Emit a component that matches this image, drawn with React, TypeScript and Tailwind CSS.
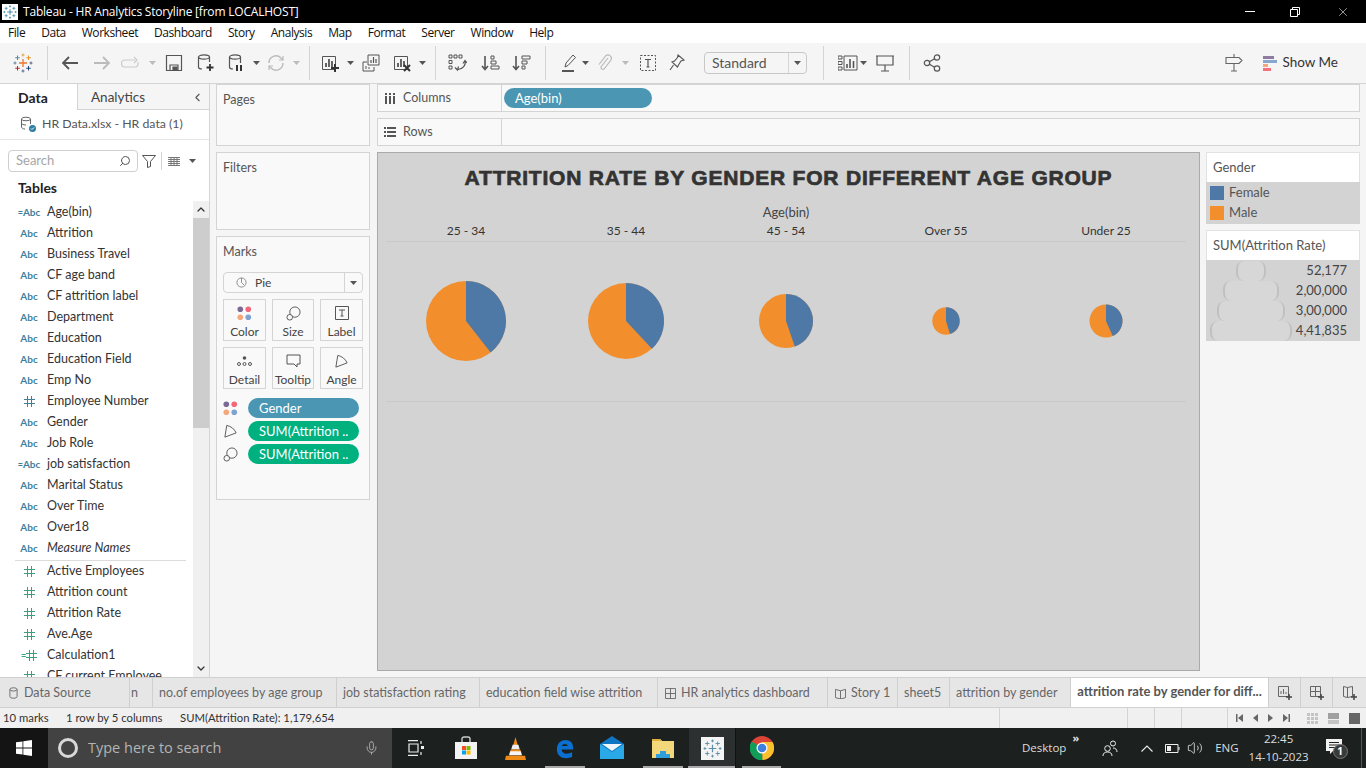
import type { ReactNode } from 'react';
import { X, ChevronLeft, ChevronUp, ChevronDown, Search, Mic, Volume2 } from 'lucide-react';

const dims = [
  { name: 'Age(bin)', calc: true },
  { name: 'Attrition' },
  { name: 'Business Travel' },
  { name: 'CF age band' },
  { name: 'CF attrition label' },
  { name: 'Department' },
  { name: 'Education' },
  { name: 'Education Field' },
  { name: 'Emp No' },
  { name: 'Employee Number', hash: true },
  { name: 'Gender' },
  { name: 'Job Role' },
  { name: 'job satisfaction', calc: true },
  { name: 'Marital Status' },
  { name: 'Over Time' },
  { name: 'Over18' },
  { name: 'Measure Names', italic: true },
];

const measures = [
  { name: 'Active Employees' },
  { name: 'Attrition count' },
  { name: 'Attrition Rate' },
  { name: 'Ave.Age' },
  { name: 'Calculation1', calc: true },
  { name: 'CF current Employee' },
];

const pies = [
  { label: '25 - 34', r: 40, angle: 142 },
  { label: '35 - 44', r: 38, angle: 137 },
  { label: '45 - 54', r: 27, angle: 161 },
  { label: 'Over 55', r: 13.7, angle: 163 },
  { label: 'Under 25', r: 16.5, angle: 156 },
];

const tabs = [
  { name: 'no.of employees by age group', w: 'w-[184px]' },
  { name: 'job statisfaction rating', w: 'w-[143px]' },
  { name: 'education field wise attrition', w: 'w-[178px]' },
  { name: 'HR analytics dashboard', w: 'w-[170px]', icon: 'dash' },
  { name: 'Story 1', w: 'w-[70px]', icon: 'story' },
  { name: 'sheet5', w: 'w-[52px]' },
  { name: 'attrition by gender', w: 'w-[121px]' },
];

function Ico({ children, className = '' }: { children: ReactNode; className?: string }) {
  return (
    <svg viewBox="0 0 20 20" fill="none" stroke="currentColor" strokeWidth="1.2" className={`w-5 h-5 shrink-0 ${className}`}>
      {children}
    </svg>
  );
}

function Caret({ className = '' }: { className?: string }) {
  return (
    <svg viewBox="0 0 7 4" className={`w-[7px] h-1 shrink-0 ${className}`}>
      <path d="M0 0h7L3.5 4z" fill="currentColor" />
    </svg>
  );
}

function Sep({ className = '' }: { className?: string }) {
  return <div className={`w-px h-[34px] bg-[#d4d4d4] shrink-0 ${className}`} />;
}

function Snowflake({ className = '', mono }: { className?: string; mono?: string }) {
  const c = (x: string) => mono ?? x;
  return (
    <svg viewBox="0 0 20 20" className={className} strokeWidth="1" fill="none">
      <path d="M10 6v8M6 10h8" stroke={c('#e8762d')} strokeWidth="1.3" />
      <path d="M4.500 2.500v4.500M2.250 4.750h4.500" stroke={c('#5b879b')} />
      <path d="M15.500 2.500v4.500M13.250 4.750h4.500" stroke={c('#eb9129')} />
      <path d="M4.500 13v4.500M2.250 15.250h4.500" stroke={c('#c72035')} />
      <path d="M15.500 13v4.500M13.250 15.250h4.500" stroke={c('#1f447e')} />
      <path d="M10 .5v3M8.500 2h3" stroke={c('#e8a33d')} />
      <path d="M10 16.500v3M8.500 18h3" stroke={c('#5c6692')} />
      <path d="M2 8.500v3M.5 10h3" stroke={c('#59879b')} />
      <path d="M18 8.500v3M16.500 10h3" stroke={c('#5b6591')} />
    </svg>
  );
}

function Bars() {
  return (
    <g>
      <path d="M2.500 3.500h13v13h-13z" strokeWidth="1" />
      <path d="M6 14V10M9 14V6M12 14V8" strokeWidth="1.800" />
    </g>
  );
}

function ColorDots({ className = '' }: { className?: string }) {
  return (
    <svg viewBox="0 0 16 16" className={`w-[15px] h-[15px] ${className}`}>
      <circle cx="3.500" cy="3.500" r="3" fill="#7b6a94" />
      <circle cx="12" cy="3.500" r="3" fill="#f2687a" />
      <circle cx="3.500" cy="12" r="3" fill="#f4a77a" />
      <circle cx="12" cy="12" r="3" fill="#7fa2cf" />
    </svg>
  );
}

function SizeIcon({ className = '' }: { className?: string }) {
  return (
    <svg viewBox="0 0 16 16" fill="none" stroke="#555" strokeWidth="1" className={`w-[15px] h-[15px] ${className}`}>
      <circle cx="9.500" cy="6.500" r="5.500" fill="#f9f9f9" />
      <circle cx="4" cy="12" r="3" fill="#f9f9f9" />
    </svg>
  );
}

function AngleIcon({ className = '' }: { className?: string }) {
  return (
    <svg viewBox="0 0 16 16" fill="none" stroke="#555" strokeWidth="1" className={`w-[15px] h-[15px] ${className}`}>
      <path d="M4 1.500 2 14l12-4.500C12 5 8.500 2.500 4 1.500z" />
    </svg>
  );
}

function Toolbar() {
  return (
    <div className="h-[41px] bg-[#f5f5f5] border-b border-[#d4d4d4] flex items-center pl-[13px] text-[#555] shrink-0">
      <Snowflake className="w-5 h-5 shrink-0" />
      <Sep className="ml-[14px]" />
      <Ico className="ml-[12px]"><path d="M18 10H3M9 4l-6 6 6 6" strokeWidth="1.800" /></Ico>
      <Ico className="ml-[12px] text-[#bbb]"><path d="M2 10h15M11 4l6 6-6 6" strokeWidth="1.800" /></Ico>
      <Ico className="ml-[9px] text-[#ccc]"><path d="M14 7H4a3 3 0 0 0 0 7h10a3 3 0 0 0 3-3V9M13 4l3 3-3 3" /></Ico>
      <Caret className="ml-[8px] text-[#bbb]" />
      <Ico className="ml-[8px]"><path d="M2.500 2.500h15v15h-15zM6 17v-5h8v5" /><path d="M9 14h4v3H9z" fill="currentColor" /></Ico>
      <Ico className="ml-[11px]">
        <ellipse cx="9" cy="4" rx="5.500" ry="2.200" />
        <path d="M3.500 4v10c0 1 1.500 2 3.500 2M14.500 4v5" />
        <path d="M15 11v7M11.500 14.500h7" strokeWidth="1.800" stroke="#333" />
      </Ico>
      <Ico className="ml-[11px]">
        <ellipse cx="9" cy="4" rx="5.500" ry="2.200" />
        <path d="M3.500 4v10c0 1 1.500 2 3.500 2M14.500 4v6" />
        <path d="M11 12v6M15 12v6" strokeWidth="2" stroke="#333" />
      </Ico>
      <Caret className="ml-[7px]" />
      <Ico className="ml-[6px] text-[#bbb]">
        <path d="M3 10a7 7 0 0 1 12-5l2 2M17 10a7 7 0 0 1-12 5l-2-2" strokeWidth="1.400" />
        <path d="M17 3v4h-4M3 17v-4h4" strokeWidth="1.200" />
      </Ico>
      <Caret className="ml-[7px] text-[#bbb]" />
      <Sep className="ml-[9px]" />
      <Ico className="ml-[10px]"><Bars /><path d="M15 11v8M11 15h8" strokeWidth="2" stroke="#333" /></Ico>
      <Caret className="ml-[7px]" />
      <Ico className="ml-[7px]">
        <path d="M7 2h11v10H7z" strokeWidth="1" />
        <path d="M10 10V7M12.500 10V4M15 10V6" />
        <path d="M2 9h4M2 9v9h11v-4M5 16v-3M8 16v-2" strokeWidth="1" />
      </Ico>
      <Ico className="ml-[11px]"><Bars /><path d="m12 12 6 6M18 12l-6 6" strokeWidth="2" stroke="#333" /></Ico>
      <Caret className="ml-[7px]" />
      <Sep className="ml-[9px]" />
      <Ico className="ml-[11px]">
        <path d="M2 2h3v3H2zM7 2h3v3H7zM12 2h3v3h-3zM2 7.500h3v3H2zM2 13h3v3H2z" strokeWidth="1" />
        <path d="M18 8c1 4-2 8-7 8.500M8 14.500l2.500 2.500 1-3.500M16 10.500l2-3 2 2.500" strokeWidth="1.200" />
      </Ico>
      <Ico className="ml-[13px]">
        <path d="M5 3v13M2 13l3 3.500L8 13" strokeWidth="1.600" />
        <path d="M11 3h3v3h-3zM11 8h5v3h-5zM11 13h8v3h-8z" strokeWidth="1" />
      </Ico>
      <Ico className="ml-[11px]">
        <path d="M5 3v13M2 13l3 3.500L8 13" strokeWidth="1.600" />
        <path d="M11 3h8v3h-8zM11 8h5v3h-5zM11 13h3v3h-3z" strokeWidth="1" />
      </Ico>
      <Sep className="ml-[14px]" />
      <Ico className="ml-[13px]">
        <path d="m6 14 1-4 7-8 2.500 2.500-7.500 8z" strokeWidth="1" />
        <path d="M3 18h12" strokeWidth="2" />
      </Ico>
      <Caret className="ml-[3px]" />
      <Ico className="ml-[5px] text-[#bbb]">
        <path d="m14 5-7 9a2 2 0 0 0 3 2l7-9a3.500 3.500 0 0 0-5-4.500l-7 9" strokeWidth="1.200" />
      </Ico>
      <Caret className="ml-[8px] text-[#bbb]" />
      <Ico className="ml-[9px]">
        <path d="M2.500 2.500h15v15h-15z" strokeWidth="1" strokeDasharray="2 1.500" />
        <path d="M7 6.500h6M10 6.500v7.500M8.500 14h3" strokeWidth="1.200" />
      </Ico>
      <Ico className="ml-[9px]">
        <path d="m11 2 6 5-3 1-2.500 4-1 2L5 9l2.500-1 3-3.500zM6.500 12 3 17" strokeWidth="1.100" />
      </Ico>
      <div className="ml-[17px] w-[103px] h-[22px] border border-[#c8c8c8] rounded-sm flex items-center bg-[#f5f5f5] shrink-0">
        <span className="flex-1 pl-[7px] text-[14px] text-[#555] leading-none">Standard</span>
        <span className="w-[18px] h-full border-l border-[#d4d4d4] flex items-center justify-center">
          <Caret />
        </span>
      </div>
      <Sep className="ml-[16px]" />
      <Ico className="ml-[14px]">
        <path d="M0 3h4v3H0zM0 8.500h4v3H0zM0 14h4v3H0z" strokeWidth="1" />
        <path d="M6 3h13v14H6z" strokeWidth="1" />
        <path d="M9 15v-4M12 15V6M15.500 15V8" strokeWidth="1.600" />
      </Ico>
      <Caret className="ml-[2px]" />
      <Ico className="ml-[8px]">
        <path d="M2 3h16v9H2zM1 3h18M10 12v6M6 18h8" strokeWidth="1.200" />
      </Ico>
      <Sep className="ml-[14px]" />
      <Ico className="ml-[12px]">
        <circle cx="15" cy="4.500" r="2.700" />
        <circle cx="15" cy="15.500" r="2.700" />
        <circle cx="5" cy="10" r="2.700" />
        <path d="m7.500 8.700 5-3M7.500 11.300l5 3" />
      </Ico>
      <div className="flex-1" />
      <Ico className="text-[#666]">
        <path d="M10 1v3M2 4.500h13l3 3-3 3H2zM10 10.500V18M7 18h6" strokeWidth="1.100" />
      </Ico>
      <div className="ml-[19px] flex flex-col gap-[1px] w-[15px]">
        <span className="h-[3px] w-[11px] bg-[#8e7ba0]" />
        <span className="h-[3px] w-[14px] bg-[#86a7d0]" />
        <span className="h-[3px] w-[5px] bg-[#f4a77a]" />
        <span className="h-[3px] w-[8px] bg-[#f5707f]" />
      </div>
      <span className="ml-[4px] mr-[28px] pb-[1px] text-[13.500px] text-[#333]">Show Me</span>
    </div>
  );
}

function FieldIcon({ kind, calc, color }: { kind: 'abc' | 'hash'; calc?: boolean; color: string }) {
  return (
    <span className={`w-[47px] pl-[11px] flex items-center justify-center text-[10px] font-bold shrink-0 ${color}`}>
      {calc && <span className="text-[9px] tracking-[-1px] mr-px">=</span>}
      {kind === 'abc' ? (
        <span>Abc</span>
      ) : (
        <svg viewBox="0 0 11 11" className="w-[11px] h-[11px]" stroke="currentColor" strokeWidth="1" fill="none">
          <path d="M3.500 0v11M7.500 0v11M0 3.500h11M0 7.500h11" />
        </svg>
      )}
    </span>
  );
}

function DataPane() {
  return (
    <div className="w-[210px] shrink-0 bg-white border-r border-[#d4d4d4] flex flex-col overflow-hidden">
      <div className="h-[26px] flex text-[14px] shrink-0">
        <div className="w-[77px] flex items-center pl-[18px] font-bold text-[#222]">Data</div>
        <div className="flex-1 bg-[#f5f5f5] border-l border-b border-[#d4d4d4] flex items-center pl-[13px] pt-[1px] text-[13.500px] text-[#444]">
          Analytics
          <ChevronLeft className="ml-auto mr-[5px] w-[13px] h-[13px] text-[#555]" />
        </div>
      </div>
      <div className="h-[30px] flex items-center pl-[20px] text-[12.300px] text-[#555] border-b border-[#e6e6e6] shrink-0">
        <svg viewBox="0 0 17 17" className="w-[17px] h-[17px] mr-[5px]" fill="none" stroke="#666" strokeWidth="1">
          <ellipse cx="6" cy="3" rx="4.500" ry="1.800" />
          <path d="M1.500 3v8c0 1 1.500 2 3.500 2M10.500 3v5M1.500 7c0 1 1.500 2 4.500 2" />
          <circle cx="12.500" cy="12.500" r="3.500" fill="#2f7ea3" stroke="none" />
          <path d="m11 12.500 1 1 2-2" stroke="#fff" />
        </svg>
        HR Data.xlsx - HR data (1)
      </div>
      <div className="h-[22px] mt-[10px] flex items-center pl-[8px] shrink-0">
        <div className="w-[130px] h-[22px] border border-[#cfcfcf] rounded-sm flex items-center pl-[7px] pr-[6px] text-[13px] text-[#a5a5a5]">
          Search
          <Search className="ml-auto w-[12px] h-[12px] text-[#555] -scale-x-100" />
        </div>
        <svg viewBox="0 0 14 14" className="w-[14px] h-[14px] ml-[4px]" fill="none" stroke="#555" strokeWidth="1">
          <path d="M.500 1.500h13L8.500 7.500v5l-3 1v-6z" />
        </svg>
        <span className="w-px h-[18px] bg-[#d4d4d4] ml-[5px]" />
        <svg viewBox="0 0 12 9" className="w-[12px] h-[9px] ml-[6px]" stroke="#777" strokeWidth="1" fill="none">
          <path d="M0 .500h12M0 2.500h12M0 4.500h12M0 6.500h12M0 8.500h12M3 0v9M6 0v9M9 0v9" />
        </svg>
        <Caret className="ml-[9px] text-[#555]" />
      </div>
      <div className="h-[29px] flex items-end pl-[18px] pb-[3px] text-[14px] font-bold text-[#222] shrink-0">Tables</div>
      <div className="flex-1 flex min-h-0">
        <div className="flex-1 overflow-hidden pt-[1px] text-[12.500px] text-[#333]">
          {dims.map((f) => (
            <div key={f.name} className="h-[21px] flex items-center">
              <FieldIcon kind={f.hash ? 'hash' : 'abc'} calc={f.calc} color="text-[#3f7f9d]" />
              <span className={`whitespace-nowrap ${f.italic ? 'italic' : ''}`}>{f.name}</span>
            </div>
          ))}
          <div className="h-px bg-[#dcdcdc] ml-[15px] mr-[7px] mt-[1px]" />
          {measures.map((f) => (
            <div key={f.name} className="h-[21px] flex items-center">
              <FieldIcon kind="hash" calc={f.calc} color="text-[#3a9f7c]" />
              <span className="whitespace-nowrap">{f.name}</span>
            </div>
          ))}
        </div>
        <div className="w-[16px] bg-[#f0f0f0] flex flex-col items-center shrink-0">
          <ChevronUp className="h-[17px] w-[12px] text-[#333] shrink-0" strokeWidth={2.500} />
          <div className="w-full h-[210px] bg-[#cdcdcd]" />
          <ChevronDown className="mt-auto h-[17px] w-[12px] text-[#333] shrink-0" strokeWidth={2.500} />
        </div>
      </div>
    </div>
  );
}

function MarkBtn({ label, icon }: { label: string; icon: ReactNode }) {
  return (
    <div className="border border-[#d4d4d4] flex flex-col items-center justify-between pt-[5px] pb-[1px] text-[12px] text-[#444] bg-[#f9f9f9]">
      <span className="h-[16px] flex items-center">{icon}</span>
      <span className="leading-[14px] whitespace-nowrap">{label}</span>
    </div>
  );
}

function MarksPill({ icon, label, color }: { icon: ReactNode; label: string; color: string }) {
  return (
    <div className="h-[20px] flex items-center">
      <span className="w-[15px] mr-[10px] flex justify-center shrink-0">{icon}</span>
      <span className={`w-[111px] h-[20px] rounded-full pl-[11px] text-[13px] leading-[20px] text-white whitespace-nowrap ${color}`}>{label}</span>
    </div>
  );
}

function SidePanels() {
  return (
    <div className="w-[154px] ml-[6px] shrink-0 flex flex-col text-[12.500px] text-[#555]">
      <div className="h-[62px] border border-[#d4d4d4] bg-[#f9f9f9] pl-[6px] pt-[6px]">Pages</div>
      <div className="h-[78px] mt-[6px] border border-[#d4d4d4] bg-[#f9f9f9] pl-[6px] pt-[6px]">Filters</div>
      <div className="h-[264px] mt-[6px] border border-[#d4d4d4] bg-[#f9f9f9] px-[6px] pt-[6px]">
        <div className="leading-[18px]">Marks</div>
        <div className="mt-[11px] h-[21px] border border-[#d4d4d4] rounded-sm flex items-center text-[12px] text-[#444]">
          <svg viewBox="0 0 12 12" className="w-[11px] h-[11px] ml-[12px] mr-[8px]" fill="none" stroke="#888" strokeWidth="1">
            <circle cx="6" cy="6" r="5" />
            <path d="M6 1v5l3 3" />
          </svg>
          Pie
          <span className="ml-auto w-[18px] h-full border-l border-[#d4d4d4] flex items-center justify-center text-[#555]">
            <Caret />
          </span>
        </div>
        <div className="mt-[6px] grid grid-cols-[43px_42px_43px] gap-x-[6px] gap-y-[6px] [grid-auto-rows:42px]">
          <MarkBtn label="Color" icon={<ColorDots />} />
          <MarkBtn label="Size" icon={<SizeIcon />} />
          <MarkBtn
            label="Label"
            icon={
              <svg viewBox="0 0 14 14" className="w-[14px] h-[14px]" fill="none" stroke="#555" strokeWidth="1">
                <path d="M.500.500h13v13H.500zM4 4h6M7 4v6M5.500 10h3" />
              </svg>
            }
          />
          <MarkBtn
            label="Detail"
            icon={
              <svg viewBox="0 0 15 10" className="w-[15px] h-[10px]" fill="none" stroke="#555" strokeWidth="1">
                <circle cx="7.500" cy="2" r="1.800" fill="#555" stroke="none" />
                <circle cx="2" cy="8" r="1.500" />
                <circle cx="7.500" cy="8" r="1.500" />
                <circle cx="13" cy="8" r="1.500" />
              </svg>
            }
          />
          <MarkBtn
            label="Tooltip"
            icon={
              <svg viewBox="0 0 15 14" className="w-[15px] h-[14px]" fill="none" stroke="#555" strokeWidth="1">
                <path d="M1 1h13v9h-3v3l-3-3H1z" />
              </svg>
            }
          />
          <MarkBtn label="Angle" icon={<AngleIcon />} />
        </div>
        <div className="mt-[9px] flex flex-col gap-[3px]">
          <MarksPill icon={<ColorDots />} label="Gender" color="bg-[#4b96b3]" />
          <MarksPill icon={<AngleIcon />} label="SUM(Attrition .." color="bg-[#00b180]" />
          <MarksPill icon={<SizeIcon />} label="SUM(Attrition .." color="bg-[#00b180]" />
        </div>
      </div>
    </div>
  );
}

function Shelf({ label, icon, children, className = '' }: { label: string; icon: ReactNode; children?: ReactNode; className?: string }) {
  return (
    <div className={`h-[28px] border border-[#d4d4d4] bg-[#f9f9f9] flex items-center text-[12.500px] text-[#555] ${className}`}>
      <span className="w-[124px] h-full border-r border-[#d4d4d4] flex items-center pl-[6px] shrink-0">
        <span className="w-[12px] mr-[7px] flex justify-center">{icon}</span>
        {label}
      </span>
      <div className="pl-[2px]">{children}</div>
    </div>
  );
}

function PieMark({ r, angle }: { r: number; angle: number }) {
  const a = (angle * Math.PI) / 180;
  const x = 50 + r * Math.sin(a);
  const y = 50 - r * Math.cos(a);
  return (
    <svg viewBox="0 0 100 100" className="w-[100px] h-[100px]">
      <circle cx="50" cy="50" r={r} fill="#f28e2b" />
      <path d={`M50 50V${50 - r}A${r} ${r} 0 0 1 ${x} ${y}Z`} fill="#4e79a7" />
    </svg>
  );
}

function Chart() {
  return (
    <div className="w-[823px] h-[519px] bg-[#d3d3d3] border border-[#aaaaaa] flex flex-col shrink-0">
      <div className="h-[38px] mt-[6px] flex items-center justify-center text-[21px] font-bold tracking-[0.800px] text-[#333] font-['Liberation_Sans',sans-serif] [-webkit-text-stroke:0.7px_#333] whitespace-nowrap">
        ATTRITION RATE BY GENDER FOR DIFFERENT AGE GROUP
      </div>
      <div className="ml-[8px] w-[800px]">
        <div className="mt-[6px] h-[18px] text-center text-[13px] leading-[18px] text-[#444]">Age(bin)</div>
        <div className="grid grid-cols-5 h-[21px] border-b border-[#c8c8c8] text-[12px] leading-[20px] text-[#333] text-center">
          {pies.map((p) => (
            <span key={p.label}>{p.label}</span>
          ))}
        </div>
        <div className="grid grid-cols-5 h-[160px] border-b border-[#c8c8c8]">
          {pies.map((p) => (
            <div key={p.label} className="flex items-center justify-center pb-[2px]">
              <PieMark r={p.r} angle={p.angle} />
            </div>
          ))}
        </div>
      </div>
    </div>
  );
}

function SizeLegendRow({ width, value, bar }: { width: string; value: string; bar: string }) {
  return (
    <div className="h-[20px] flex items-center justify-end pr-[13px] relative">
      <span className={`absolute top-0 h-[20px] border-x-2 border-[#c0c0c0] rounded-[8px] bg-[#d7d7d7] ${width} ${bar}`} />
      <span className="relative text-[13px] text-[#444]">{value}</span>
    </div>
  );
}

function Legends() {
  return (
    <div className="w-[154px] ml-[6px] shrink-0 flex flex-col text-[13px]">
      <div className="h-[30px] pt-[1px] bg-white border border-b-0 border-[#e2e2e2] flex items-center pl-[6px] text-[#555]">Gender</div>
      <div className="h-[42px] bg-[#d3d3d3] pl-[4px] pt-[4px] flex flex-col gap-[6px] text-[#555]">
        <div className="flex items-center h-[14px]">
          <span className="w-[14px] h-[14px] bg-[#4e79a7] mr-[5px]" />
          Female
        </div>
        <div className="flex items-center h-[14px]">
          <span className="w-[14px] h-[14px] bg-[#f28e2b] mr-[5px]" />
          Male
        </div>
      </div>
      <div className="h-[30px] mt-[6px] bg-white border border-b-0 border-[#e2e2e2] flex items-center pl-[6px] text-[#555]">SUM(Attrition Rate)</div>
      <div className="h-[81px] bg-[#d3d3d3] pt-[1px]">
        <SizeLegendRow width="w-[30px]" bar="left-[30px]" value="52,177" />
        <SizeLegendRow width="w-[56px]" bar="left-[17px]" value="2,00,000" />
        <SizeLegendRow width="w-[68px]" bar="left-[11px]" value="3,00,000" />
        <SizeLegendRow width="w-[82px]" bar="left-[4px]" value="4,41,835" />
      </div>
    </div>
  );
}

function TabBar() {
  return (
    <div className="h-[31px] bg-[#e6e6e6] border-y border-[#d0d0d0] flex text-[12.500px] text-[#666] shrink-0 whitespace-nowrap">
      <div className="w-[130px] flex items-center pl-[9px] pt-[1px] border-r border-[#cfcfcf]">
        <svg viewBox="0 0 10 13" className="w-[9px] h-[12px] mr-[6px]" fill="none" stroke="#666" strokeWidth="1">
          <ellipse cx="5" cy="2.500" rx="4" ry="1.800" />
          <path d="M1 2.500v8c0 1 1.500 1.800 4 1.800s4-.8 4-1.800v-8" />
        </svg>
        Data Source
      </div>
      <div className="w-[23px] flex items-center pl-px pt-[1px] border-r border-[#cfcfcf]">n</div>
      {tabs.map((t) => (
        <div key={t.name} className={`${t.w} flex items-center pl-[6px] pt-[1px] border-r border-[#cfcfcf] overflow-hidden`}>
          {t.icon === 'dash' && (
            <svg viewBox="0 0 12 12" className="w-[11px] h-[11px] ml-[1px] mr-[5px]" fill="none" stroke="#666" strokeWidth="1">
              <path d="M.500.500h11v11H.500zM6 .500v11M.500 6h11" />
            </svg>
          )}
          {t.icon === 'story' && (
            <svg viewBox="0 0 12 12" className="w-[11px] h-[11px] ml-[1px] mr-[5px]" fill="none" stroke="#666" strokeWidth="1">
              <path d="M.500 1.500 6 3l5.500-1.500v9L6 12 .500 10.500zM6 3v9" />
            </svg>
          )}
          {t.name}
        </div>
      ))}
      <div className="w-[198px] bg-white flex items-center justify-center pb-[2px] text-[13px] font-bold text-[#555] border-r border-[#cfcfcf]">
        attrition rate by gender for diff...
      </div>
      <div className="w-[32px] flex items-center justify-center border-r border-[#cfcfcf]">
        <svg viewBox="0 0 16 16" className="w-[16px] h-[16px]" fill="none" stroke="#666" strokeWidth="1">
          <path d="M1.500 1.500h10v10h-10zM4 9V6M6.500 9V4M9 9V7" />
          <path d="M12 9v6M9 12h6" stroke="#444" strokeWidth="1.500" />
        </svg>
      </div>
      <div className="w-[32px] flex items-center justify-center border-r border-[#cfcfcf]">
        <svg viewBox="0 0 16 16" className="w-[16px] h-[16px]" fill="none" stroke="#666" strokeWidth="1">
          <path d="M1.500 1.500h10v10h-10zM6.500 1.500v10M1.500 6.500h10" />
          <path d="M12 9v6M9 12h6" stroke="#444" strokeWidth="1.500" />
        </svg>
      </div>
      <div className="flex-1 flex items-center justify-center">
        <svg viewBox="0 0 16 16" className="w-[16px] h-[16px]" fill="none" stroke="#666" strokeWidth="1">
          <path d="m1.500 1.500 4 1 5-1v10l-5 1-4-1zM5.500 2.500v10" />
          <path d="M12 9v6M9 12h6" stroke="#444" strokeWidth="1.500" />
        </svg>
      </div>
    </div>
  );
}

function StatusBar() {
  return (
    <div className="h-[20px] bg-[#f0f0f0] flex items-center text-[11.300px] text-[#333] shrink-0 whitespace-nowrap">
      <span className="w-[66px] pl-[3px]">10 marks</span>
      <span className="w-[114px]">1 row by 5 columns</span>
      <span className="w-[819px]">SUM(Attrition Rate): 1,179,654</span>
      <span className="w-[128px] h-full border-l border-[#d4d4d4]" />
      <span className="w-[27px] h-full border-l border-[#d4d4d4]" />
      <span className="w-[27px] h-full border-l border-[#d4d4d4]" />
      <span className="w-[46px] h-full border-l border-[#d4d4d4]" />
      <div className="flex-1 border-l border-[#d4d4d4] h-full flex items-center pl-[8px] text-[#666]">
        <svg viewBox="0 0 54 8" className="w-[54px] h-[8px] shrink-0" fill="currentColor">
          <path d="M0 0h1.500v8H0zM7 0v8L2 4zM22 0v8l-5-4zM32 0l5 4-5 4zM47 0l5 4-5 4zM52.500 0H54v8h-1.500z" />
        </svg>
        <span className="ml-[17px] grid grid-cols-3 gap-px w-[11px] h-[11px] shrink-0">
          {Array.from({ length: 9 }).map((_, i) => (
            <span key={i} className="bg-[#c4c4c4]" />
          ))}
        </span>
        <span className="ml-[10px] w-[11px] h-[11px] flex flex-col gap-px shrink-0">
          <span className="flex-[2] bg-[#a0a0a0]" />
          <span className="flex-1 bg-[#c4c4c4]" />
        </span>
        <span className="ml-[10px] w-[11px] h-[11px] bg-[#666] shrink-0" />
      </div>
    </div>
  );
}

function Taskbar() {
  return (
    <div className="h-[40px] bg-[#1c2120] flex items-center text-[#ddd] shrink-0 relative font-['Open_Sans',sans-serif]">
      <div className="w-[48px] h-full bg-[#141414] flex items-center justify-center shrink-0">
        <svg viewBox="0 0 16 16" className="w-[16px] h-[16px]" fill="#fff">
          <path d="M0 2.300 6.500 1.400v6.200H0zM7.300 1.300 16 0v7.600H7.300zM0 8.400h6.500v6.200L0 13.700zM7.300 8.400H16V16l-8.700-1.300z" />
        </svg>
      </div>
      <div className="w-[344px] h-full bg-[#424242] flex items-center pl-[10px] shrink-0">
        <span className="w-[20px] h-[20px] rounded-full border-[3px] border-[#d8d8d8] shrink-0" />
        <span className="ml-[10px] text-[14.500px] text-[#b4b4b4] whitespace-nowrap">Type here to search</span>
        <Mic className="ml-auto mr-[13px] w-[15px] h-[18px] text-[#bbb]" strokeWidth={1.300} />
      </div>
      <svg viewBox="0 0 18 16" className="w-[18px] h-[16px] ml-[15px] shrink-0" fill="none" stroke="#eee" strokeWidth="1.200">
        <path d="M1 .600h10M1 15.400h10M2 4h9v8H2zM14 1v3M14 12v3" />
        <path d="M14 6h3v3h-3z" fill="#eee" stroke="none" />
      </svg>
      <svg viewBox="0 0 24 24" className="w-[24px] h-[24px] ml-[29px] shrink-0">
        <path d="M8 6V3a2 2 0 0 1 2-2h4a2 2 0 0 1 2 2v3" fill="none" stroke="#ccc" strokeWidth="1.400" />
        <path d="M1 6h22v17H1z" fill="#f3f3f3" />
        <path d="M8 10h4v4H8z" fill="#f25022" />
        <path d="M12.500 10h4v4h-4z" fill="#7fba00" />
        <path d="M8 14.500h4v4H8z" fill="#00a4ef" />
        <path d="M12.500 14.500h4v4h-4z" fill="#ffb900" />
      </svg>
      <svg viewBox="0 0 22 24" className="w-[21px] h-[23px] ml-[27px] shrink-0">
        <path d="M11 0 8 11h6z" fill="#f08a13" />
        <path d="m8 8-1.500 5h9L14 8z" fill="#eee" />
        <path d="m6 13-2 6h14l-2-6z" fill="#f08a13" />
        <path d="m5.500 15-1 4h13l-1-4z" fill="#f5f5f5" />
        <path d="M1 19.500h20L22 24H0z" fill="#ef8a14" />
      </svg>
      <svg viewBox="0 0 22 24" className="w-[21px] h-[23px] ml-[28px] shrink-0" fill="none">
        <path d="M3 13C3 6 8 3 12 3c5 0 8 3 8 8v2H8c0 4 5 6 11 3v5c-8 3-16 0-16-8z" fill="#0a6fd0" />
        <path d="M8 9.500h6.500C14 6.500 9 6.500 8 9.500z" fill="#1c2120" />
      </svg>
      <svg viewBox="0 0 24 24" className="w-[24px] h-[24px] ml-[25px] shrink-0">
        <path d="M0 8 12 0l12 8v15H0z" fill="#0e74c4" />
        <path d="m0 8 12 8 12-8v15H0z" fill="#29a9e8" />
        <path d="M2 8h20l-10 7z" fill="#eef6fb" />
      </svg>
      <svg viewBox="0 0 22 20" className="w-[22px] h-[20px] ml-[28px] shrink-0">
        <path d="M0 1h8l2 2h12v17H0z" fill="#f5d77b" />
        <path d="M0 1h8l2 2H0z" fill="#e0b03c" />
        <path d="M4 17v-4h4v-3h6v3h4v4z" fill="#2e9fdc" transform="translate(0 3)" />
      </svg>
      <div className="ml-[15px] w-[47px] h-full bg-[#2c3030] border-r border-[#111] flex items-center justify-center shrink-0">
        <span className="w-[23px] h-[23px] bg-[#f4f4f4] flex items-center justify-center">
          <Snowflake className="w-[19px] h-[19px]" mono="#5f8faa" />
        </span>
      </div>
      <svg viewBox="0 0 24 24" className="w-[24px] h-[24px] ml-[14px] shrink-0">
        <circle cx="12" cy="12" r="12" fill="#db4437" />
        <path d="M12 12 2 18a12 12 0 0 0 11 6z" fill="#0f9d58" />
        <path d="M1.600 5.500 12 12l-.5 12A12 12 0 0 1 1.600 5.500z" fill="#0f9d58" />
        <path d="M12 6h10.500a12 12 0 0 1-10 18z" fill="#fbc02d" />
        <circle cx="12" cy="12" r="5.500" fill="#fff" />
        <circle cx="12" cy="12" r="4.300" fill="#3f7fe0" />
      </svg>
      <span className="ml-[248px] text-[11.500px] whitespace-nowrap">Desktop</span>
      <span className="ml-[6px] -mt-[22px] text-[11px] font-bold leading-none">»</span>
      <svg viewBox="0 0 16 16" className="w-[16px] h-[16px] ml-[23px] shrink-0" fill="none" stroke="#eee" strokeWidth="1">
        <circle cx="5.500" cy="8.500" r="2.800" />
        <path d="M1 16c0-3 2-4 4.500-4S10 13 10 16" />
        <circle cx="11" cy="3.500" r="2.500" />
        <path d="M11 8c2.500 0 4 1.500 4 4" />
      </svg>
      <svg viewBox="0 0 12 7" className="w-[12px] h-[7px] ml-[23px] shrink-0" fill="none" stroke="#eee" strokeWidth="1.100">
        <path d="m.5 6.500 5.500-5.500 5.500 5.500" />
      </svg>
      <svg viewBox="0 0 15 9" className="w-[15px] h-[9px] ml-[12px] shrink-0" fill="none" stroke="#eee" strokeWidth="1">
        <path d="M.5.500h12.500v8H.5z" />
        <path d="M14 3v3" />
        <path d="M2 2h4v5H2z" fill="#eee" stroke="none" />
      </svg>
      <Volume2 className="w-[16px] h-[16px] ml-[7px] text-[#eee] shrink-0" strokeWidth={1.200} />
      <span className="ml-[12px] text-[11.500px] whitespace-nowrap">ENG</span>
      <div className="w-[80px] flex flex-col items-center text-[11.500px] leading-[18px] shrink-0">
        <span>22:45</span>
        <span>14-10-2023</span>
      </div>
      <div className="relative ml-[7px] w-[18px] h-[18px] shrink-0">
        <svg viewBox="0 0 16 16" className="w-[16px] h-[16px]" fill="#f3f3f3">
          <path d="M0 0h16v12H7l-3 3v-3H0z" />
          <path d="M3 3.500h10M3 6h10M3 8.500h6" stroke="#222" strokeWidth="1" />
        </svg>
        <span className="absolute left-[7px] top-[5px] w-[15px] h-[15px] rounded-full bg-[#3a3a3a] border border-[#777] text-[10px] leading-[13px] text-center font-bold text-white">1</span>
      </div>
      {/* taskbar running-app underlines */}
      <span className="absolute left-[545px] bottom-0 w-[40px] h-[2px] bg-[#aaa]" />
      <span className="absolute left-[643px] bottom-0 w-[40px] h-[2px] bg-[#aaa]" />
      <span className="absolute left-[688px] bottom-0 w-[47px] h-[2px] bg-[#aaa]" />
      <span className="absolute left-[742px] bottom-0 w-[39px] h-[2px] bg-[#aaa]" />
      <span className="absolute left-[1361px] top-0 w-px h-full bg-[#555]" />
    </div>
  );
}

export default function App() {
  return (
    <div className="w-[1366px] h-[768px] overflow-hidden flex flex-col bg-[#f5f5f5] font-['Lato',sans-serif]">
      <div className="h-[23px] bg-black text-white flex items-center shrink-0 font-['Open_Sans',sans-serif]">
        <span className="w-[16px] h-[16px] ml-[2px] bg-white flex items-center justify-center">
          <Snowflake className="w-[14px] h-[14px]" mono="#3b7f9f" />
        </span>
        <span className="ml-[5px] text-[12px] tracking-[-0.2px] whitespace-nowrap">Tableau - HR Analytics Storyline [from LOCALHOST]</span>
        <div className="ml-auto flex items-center">
          <span className="w-[10px] h-px bg-white mr-[35px]" />
          <svg viewBox="0 0 10 10" className="w-[10px] h-[10px] mr-[36px]" fill="none" stroke="#fff" strokeWidth="1">
            <path d="M.5 2.500h7v7h-7zM2.500 2.500v-2h7v7h-2" />
          </svg>
          <X className="w-[14px] h-[14px] mr-[16px]" strokeWidth={1} />
        </div>
      </div>
      <div className="h-[20px] bg-white flex items-center pl-[8px] gap-[16px] text-[12px] tracking-[-0.45px] text-[#111] shrink-0 font-['Open_Sans',sans-serif]">
        {['File', 'Data', 'Worksheet', 'Dashboard', 'Story', 'Analysis', 'Map', 'Format', 'Server', 'Window', 'Help'].map((m) => (
          <span key={m}>{m}</span>
        ))}
      </div>
      <Toolbar />
      <div className="flex-1 flex min-h-0">
        <DataPane />
        <SidePanels />
        <div className="ml-[7px] flex-1 flex flex-col min-w-0">
          <Shelf
            label="Columns"
            icon={
              <svg viewBox="0 0 10 11" className="w-[10px] h-[11px]" fill="#555">
                <path d="M0 0h2v2H0zM4 0h2v2H4zM8 0h2v2H8zM0 3h2v8H0zM4 3h2v8H4zM8 3h2v8H8z" />
              </svg>
            }
            className="w-[983px]"
          >
            <div className="w-[148px] h-[20px] rounded-full bg-[#4b96b3] pl-[11px] text-[13px] leading-[20px] text-white">Age(bin)</div>
          </Shelf>
          <Shelf
            label="Rows"
            icon={
              <svg viewBox="0 0 12 10" className="w-[12px] h-[10px]" fill="#555">
                <path d="M0 0h2v2H0zM3 0h9v2H3zM0 4h2v2H0zM3 4h9v2H3zM0 8h2v2H0zM3 8h9v2H3z" />
              </svg>
            }
            className="w-[983px] mt-[6px]"
          />
          <div className="flex mt-[6px]">
            <Chart />
            <Legends />
          </div>
        </div>
      </div>
      <TabBar />
      <StatusBar />
      <Taskbar />
    </div>
  );
}
